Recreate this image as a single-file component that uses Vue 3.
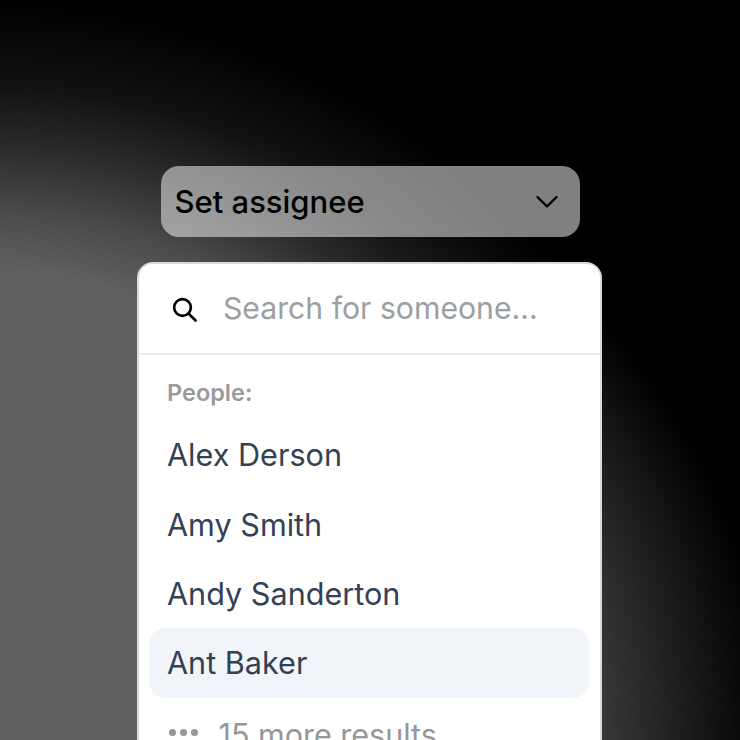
<script setup>
const people = ['Alex Derson', 'Amy Smith', 'Andy Sanderton', 'Ant Baker']
</script>

<template>
  <div class="stage">
    <div class="column">
      <div class="trigger">
        <span class="title">Set assignee</span>
        <svg class="chevron" width="24" height="24" viewBox="0 0 24 24" fill="none" stroke="#000" stroke-width="2.4" stroke-linecap="round" stroke-linejoin="round">
          <path d="M2.5 7L12 16.5 21.5 7" />
        </svg>
      </div>
      <div class="menu">
        <div class="search">
          <svg class="lens" width="30" height="30" viewBox="0 0 28 28" fill="none" stroke="#000" stroke-width="2.5" stroke-linecap="round">
            <circle cx="12.6" cy="12.6" r="7.8" />
            <path d="M18.4 18.4l6.4 6.4" />
          </svg>
          <span class="placeholder">Search for someone...</span>
        </div>
        <div class="list">
          <div class="label">People:</div>
          <div v-for="(p, i) in people" :key="p" class="item" :class="{ active: i === 3 }">{{ p }}</div>
          <div class="more">
            <span class="dots"><i></i><i></i><i></i></span>
            <span>15 more results</span>
          </div>
        </div>
      </div>
    </div>
  </div>
</template>

<style>
html, body { margin: 0; background: #000; }
</style>

<style scoped>
.stage {
  width: 740px;
  height: 740px;
  overflow: hidden;
  box-sizing: border-box;
  padding-top: 166px;
  background:
    radial-gradient(640px 625px at 130px 740px, #606060 0%, #606060 55%, #000 100%),
    radial-gradient(720px 660px at -20px 660px, #606060 0%, #606060 59%, #4a4a4a 68%, #2a2a2a 78%, #121212 87%, #000 100%);
  background-blend-mode: lighten;
  font-family: Inter, "Liberation Sans", sans-serif;
}
.column {
  display: flex;
  flex-direction: column;
  align-items: flex-start;
  width: 740px;
}
.trigger {
  width: 419.5px;
  height: 71px;
  margin-left: 160.5px;
  box-sizing: border-box;
  padding: 0 21px 0 14px;
  display: flex;
  align-items: center;
  justify-content: space-between;
  border-radius: 18px;
  background: rgba(255, 255, 255, .5);
  color: #000;
  font-size: 31px;
  font-weight: 500;
}
.title { margin-top: -1px; }
.menu {
  width: 465.5px;
  height: 520px;
  margin-top: 25px;
  margin-left: 136.5px;
  box-sizing: border-box;
  border: 2px solid #d9dadc;
  border-bottom: 0;
  border-radius: 16px 16px 0 0;
  background: #fff;
}
.search {
  height: 91px;
  box-sizing: border-box;
  padding-left: 30.5px;
  display: flex;
  align-items: center;
  gap: 24px;
  border-bottom: 2px solid #e9eaec;
}
.placeholder {
  margin-top: -1px;
  font-size: 30.2px;
  color: #9ca0a0;
}
.list {
  padding: 0 11px 0 10.5px;
}
.label {
  height: 65px;
  box-sizing: border-box;
  padding: 24px 0 0 18px;
  font-size: 23.5px;
  font-weight: 600;
  line-height: 27px;
  color: #9a9a9a;
}
.item {
  height: 69.4px;
  box-sizing: border-box;
  padding-left: 18px;
  display: flex;
  align-items: center;
  border-radius: 16px;
  font-size: 30.6px;
  color: #334155;
}
.active { background: #f1f5f9; }
.more {
  height: 74px;
  padding-left: 19.5px;
  display: flex;
  align-items: center;
  gap: 21px;
  font-size: 30.5px;
  color: #94979b;
}
.dots { display: flex; gap: 4px; margin-top: -4px; }
.dots i {
  width: 7px;
  height: 7px;
  border-radius: 50%;
  background: #94979b;
}
</style>
